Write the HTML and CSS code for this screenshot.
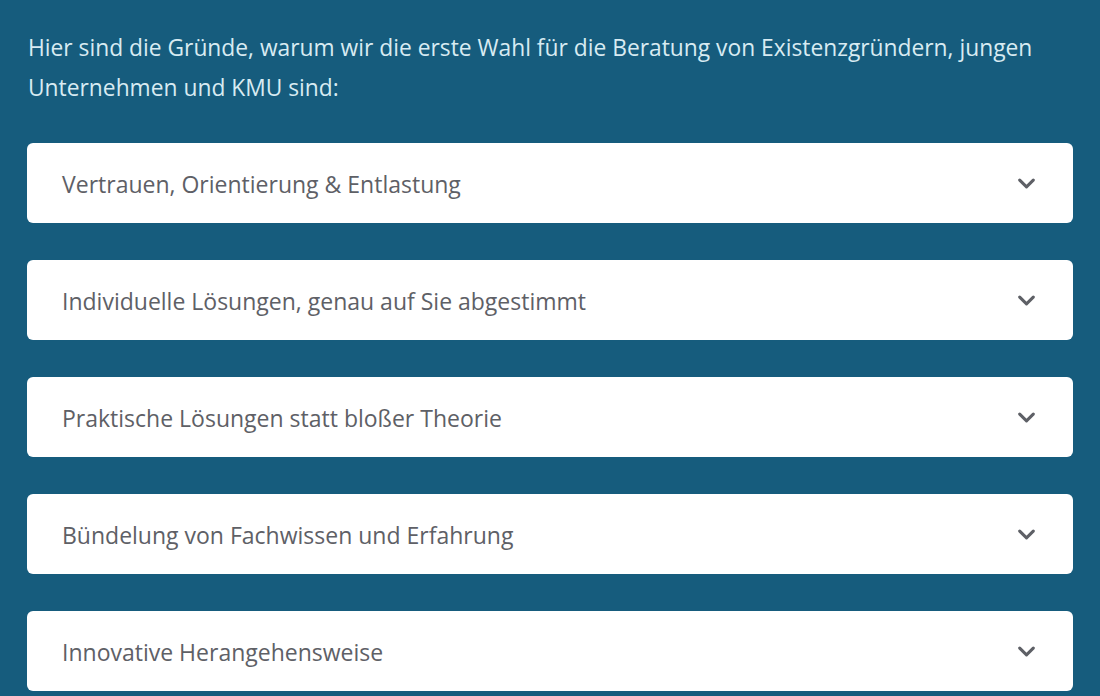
FILE: index.html
```html
<!DOCTYPE html>
<html lang="de">
<head>
  <meta charset="UTF-8" />
  <meta name="viewport" content="width=device-width, initial-scale=1.0"/>
  <title>Warum wir</title>
  <link rel="stylesheet" href="styles.css">
</head>
<body>
  <section class="reasons">
    <p class="intro">Hier sind die Gründe, warum wir die erste Wahl für die Beratung von Existenzgründern, jungen Unternehmen und KMU sind:</p>

    <div class="accordion">
      <div class="acc-item">
        <span>Vertrauen, Orientierung &amp; Entlastung</span>
        <svg class="chevron" viewBox="0 0 20 12"><path d="M2 2l8 8 8-8"/></svg>
      </div>
      <div class="acc-item">
        <span>Individuelle Lösungen, genau auf Sie abgestimmt</span>
        <svg class="chevron" viewBox="0 0 20 12"><path d="M2 2l8 8 8-8"/></svg>
      </div>
      <div class="acc-item">
        <span>Praktische Lösungen statt bloßer Theorie</span>
        <svg class="chevron" viewBox="0 0 20 12"><path d="M2 2l8 8 8-8"/></svg>
      </div>
      <div class="acc-item">
        <span>Bündelung von Fachwissen und Erfahrung</span>
        <svg class="chevron" viewBox="0 0 20 12"><path d="M2 2l8 8 8-8"/></svg>
      </div>
      <div class="acc-item">
        <span>Innovative Herangehensweise</span>
        <svg class="chevron" viewBox="0 0 20 12"><path d="M2 2l8 8 8-8"/></svg>
      </div>
    </div>
  </section>
</body>
</html>
```

FILE: styles.css
```css
body {
  font-family: 'Open Sans', 'Liberation Sans', sans-serif;
  margin: 0;
  background-color: #165c7d;
  overflow: hidden;
}
.reasons {
  padding: 28px 27px 0 28px;
}
.intro {
  margin: 0 0 35px 0;
  font-size: 22.8px;
  line-height: 40px;
  color: #d8ebf2;
}
.accordion {
  display: flex;
  flex-direction: column;
  gap: 37px;
}
.acc-item {
  height: 80px;
  margin-left: -1px;
  padding: 1px 38px 0 35px;
  box-sizing: border-box;
  background-color: #fff;
  border-radius: 6px;
  display: flex;
  justify-content: space-between;
  align-items: center;
  font-size: 23px;
  color: #5e6066;
}
.chevron {
  width: 17px;
  height: 11px;
  fill: none;
  stroke: #5e6066;
  stroke-width: 3.6;
  stroke-linecap: round;
  stroke-linejoin: round;
}
```
